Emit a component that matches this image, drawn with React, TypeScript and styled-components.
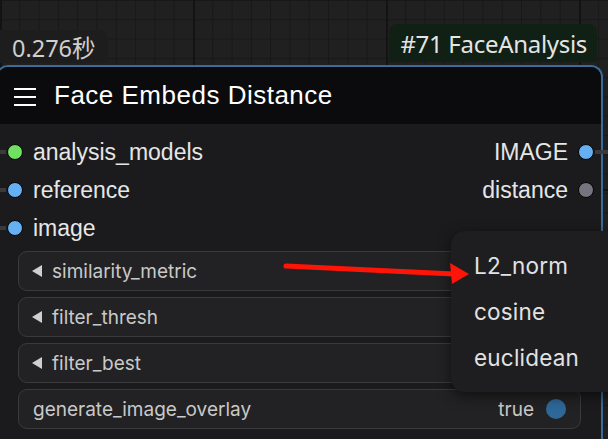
import styled, { createGlobalStyle } from "styled-components";

const GlobalStyle = createGlobalStyle`
  html, body {
    margin: 0;
    padding: 0;
    background: #1c1c1c;
  }
`;

interface SlotProp {
  name: string,
  color: string,
  linked?: boolean,
}

const inputs: SlotProp[] = [
  { name: "analysis_models", color: "#6fe05f", linked: true },
  { name: "reference", color: "#64b0f2", linked: true },
  { name: "image", color: "#64b0f2", linked: true },
];

const outputs: SlotProp[] = [
  { name: "IMAGE", color: "#64b0f2", linked: true },
  { name: "distance", color: "#77737f" },
];

const combos = ["similarity_metric", "filter_thresh", "filter_best"];
const options = ["L2_norm", "cosine", "euclidean"];

export default function App() {
  return (
    <Page>
      <GlobalStyle />
      <TopRow>
        <Timing>0.276秒</Timing>
        <Badge>#71 FaceAnalysis</Badge>
      </TopRow>

      <Node>
        <Header>
          <MenuIcon width="22" height="18" viewBox="0 0 22 18">
            <rect x="0" y="0" width="22" height="2" fill="#fff" />
            <rect x="0" y="8" width="22" height="2" fill="#fff" />
            <rect x="0" y="16" width="22" height="2" fill="#fff" />
          </MenuIcon>
          <Title>Face Embeds Distance</Title>
        </Header>

        <Body>
          <Slots>
            <SlotColumn>
              {inputs.map((s) => (
                <InputSlot key={s.name}>
                  <Dot color={s.color} $linked={s.linked} $side="in" />
                  <SlotLabel>{s.name}</SlotLabel>
                </InputSlot>
              ))}
            </SlotColumn>
            <SlotColumn>
              {outputs.map((s) => (
                <OutputSlot key={s.name}>
                  <SlotLabel>{s.name}</SlotLabel>
                  <Dot color={s.color} $linked={s.linked} $side="out" />
                </OutputSlot>
              ))}
            </SlotColumn>
          </Slots>

          <Widgets>
            {combos.map((c) => (
              <Widget key={c}>
                <LeftArrow />
                <WidgetLabel>{c}</WidgetLabel>
              </Widget>
            ))}
            <Widget $toggle>
              <WidgetLabel>generate_image_overlay</WidgetLabel>
              <ToggleValue>true</ToggleValue>
              <ToggleDot />
            </Widget>
          </Widgets>
        </Body>
      </Node>

      <Menu>
        {options.map((o) => (
          <MenuItem key={o}>{o}</MenuItem>
        ))}
      </Menu>

      <Annotation width="608" height="439" viewBox="0 0 608 439">
        <line x1="286" y1="266" x2="454" y2="274" stroke="#ff1408" strokeWidth="5" strokeLinecap="round" />
        <polygon points="469,274 450,263 452,284" fill="#ff1408" />
      </Annotation>
    </Page>
  );
}

const Page = styled.div`
  position: relative;
  width: 608px;
  height: 439px;
  overflow: hidden;
  display: flex;
  flex-direction: column;
  background-color: #202020;
  background-image:
    linear-gradient(to right, #131313 2px, transparent 2px),
    linear-gradient(to bottom, #131313 2px, transparent 2px),
    linear-gradient(to right, #181818 1px, transparent 1px),
    linear-gradient(to bottom, #181818 1px, transparent 1px);
  background-size: 193px 193px, 193px 193px, 19.3px 19.3px, 19.3px 19.3px;
  background-position: 0 0, 0 -4px, 0 0, 0 0;
`;

const TopRow = styled.div`
  height: 65px;
  display: flex;
  align-items: flex-end;
  justify-content: space-between;
  padding-right: 11px;
  box-sizing: border-box;
`;

const Timing = styled.div`
  height: 33px;
  margin-bottom: 2px;
  padding: 0 12px;
  display: flex;
  align-items: center;
  background: #1d1d1d;
  border-radius: 0 8px 0 0;
  color: #cfcfcf;
  font-family: "Noto Sans", "Noto Sans CJK SC", sans-serif;
  font-size: 23.5px;
`;

const Badge = styled.div`
  height: 38px;
  margin-bottom: 3px;
  padding: 0 10px 0 11px;
  display: flex;
  align-items: center;
  background: #112014;
  border-radius: 8px 8px 0 0;
  color: #e4e4e4;
  font-family: "Noto Sans", sans-serif;
  font-size: 24px;
  letter-spacing: -0.3px;
`;

const Node = styled.div`
  margin-left: -4px;
  width: 607px;
  flex: 1;
  box-sizing: border-box;
  border: 2px solid #3b6b98;
  border-bottom: none;
  border-radius: 12px 12px 0 0;
  background: #1b1b1d;
`;

const Header = styled.div`
  height: 57px;
  display: flex;
  align-items: center;
  gap: 18px;
  padding-left: 16px;
  background: #0b0b0d;
  border-radius: 10px 10px 0 0;
`;

const MenuIcon = styled.svg`
  display: block;
  margin-top: 2px;
`;

const Title = styled.div`
  color: #ffffff;
  font-family: "Liberation Sans", Arial, sans-serif;
  font-size: 26px;
  letter-spacing: 0.5px;
`;

const Body = styled.div`
  padding-top: 9px;
`;

const Slots = styled.div`
  display: flex;
  justify-content: space-between;
  padding: 0 7px 0 9px;
`;

const SlotColumn = styled.div`
  display: flex;
  flex-direction: column;
`;

const InputSlot = styled.div`
  height: 38px;
  display: flex;
  align-items: center;
  gap: 10px;
`;

const OutputSlot = styled(InputSlot)`
  justify-content: flex-end;
`;

const SlotLabel = styled.span`
  color: #e6e6e6;
  font-family: "Liberation Sans", Arial, sans-serif;
  font-size: 23px;
`;

const Dot = styled.span<{ color: string, $linked?: boolean, $side: "in" | "out" }>`
  position: relative;
  width: 14px;
  height: 14px;
  border-radius: 50%;
  background: ${(p) => p.color};
  border: 1.5px solid #050505;

  &::before {
    content: "";
    display: ${(p) => (p.$linked ? "block" : "none")};
    position: absolute;
    top: 5px;
    height: 4px;
    width: ${(p) => (p.$side === "in" ? "12px" : "16px")};
    ${(p) => (p.$side === "in" ? "right: 16px;" : "left: 16px;")}
    background: #3a3a3a;
  }
`;

const Widgets = styled.div`
  display: flex;
  flex-direction: column;
  gap: 6px;
  margin: 4px 20px 0;
`;

const Widget = styled.div<{ $toggle?: boolean }>`
  height: 40px;
  box-sizing: border-box;
  display: flex;
  align-items: center;
  gap: 10px;
  padding: ${(p) => (p.$toggle ? "0 14px 0 14px" : "0 0 0 13px")};
  background: #222224;
  border: 1px solid #3a3a3d;
  border-radius: 9px;
`;

const LeftArrow = styled.span`
  width: 0;
  height: 0;
  border-top: 6px solid transparent;
  border-bottom: 6px solid transparent;
  border-right: 10px solid #cfcfcf;
`;

const WidgetLabel = styled.span`
  flex: 1;
  color: #c9c9c9;
  font-family: Inter, "Noto Sans", sans-serif;
  font-size: 19px;
`;

const ToggleValue = styled.span`
  color: #c9c9c9;
  font-family: Inter, "Noto Sans", sans-serif;
  font-size: 19px;
  margin-right: 2px;
`;

const ToggleDot = styled.span`
  width: 20px;
  height: 20px;
  border-radius: 50%;
  background: #2e6898;
`;

const Menu = styled.div`
  position: absolute;
  left: 451px;
  top: 231px;
  width: 180px;
  height: 161px;
  box-sizing: border-box;
  padding: 14px 0 0 23px;
  display: flex;
  flex-direction: column;
  gap: 6px;
  background: #1e1e20;
  border-radius: 14px;
  box-shadow: 0 4px 14px rgba(0, 0, 0, 0.55);
`;

const MenuItem = styled.div`
  height: 40px;
  display: flex;
  align-items: center;
  color: #e2e2e2;
  font-family: Inter, "Noto Sans", sans-serif;
  font-size: 22.5px;
  letter-spacing: 0.2px;
`;

const Annotation = styled.svg`
  position: absolute;
  left: 0;
  top: 0;
  pointer-events: none;
`;
